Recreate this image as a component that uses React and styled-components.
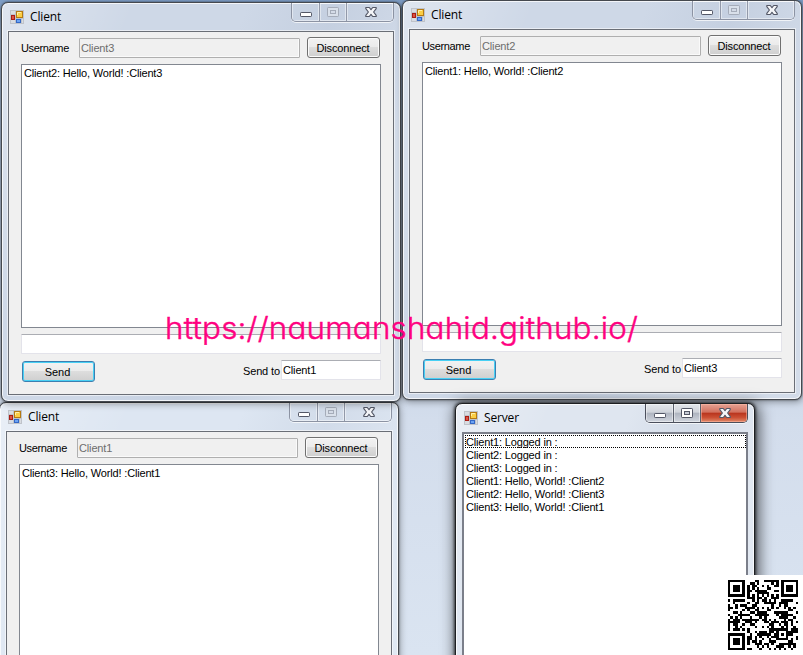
import React from "react";
import styled, { createGlobalStyle, css } from "styled-components";

const GlobalStyle = createGlobalStyle`
  *, *::before, *::after { box-sizing: border-box; }
  html, body { margin: 0; padding: 0; overflow: hidden; }
  body { font-family: "Liberation Sans", Arial, sans-serif; font-size: 11px; color: #000; }
`;

const Desktop = styled.main`
  position: relative;
  width: 803px;
  height: 655px;
  overflow: hidden;
  background: linear-gradient(180deg, #7f9fc8 0, #9db4d2 30px, #c3d0e2 300px, #d3ddec 420px, #dae4f1 655px);
`;

const Frame = styled.section`
  position: absolute;
  left: ${(p) => p.$x}px;
  top: ${(p) => p.$y}px;
  width: ${(p) => p.$w}px;
  height: ${(p) => p.$h}px;
  display: flex;
  flex-direction: column;
  padding: 0 6px 6px 6px;
  border: 1px solid ${(p) => (p.$active ? "#1d1f22" : "#45494f")};
  border-radius: 7px;
  background:
    linear-gradient(112deg, rgba(255,255,255,0.35) 0, rgba(255,255,255,0) 24%, rgba(255,255,255,0) 44%, rgba(150,165,190,0.16) 60%, rgba(255,255,255,0.1) 80%),
    ${(p) => p.$tint};
  box-shadow:
    inset 0 0 0 1px rgba(255,255,255,0.75),
    ${(p) => (p.$active ? "0 0 3px 1px rgba(0,0,0,.65), 2px 3px 14px 3px rgba(0,0,0,.55)" : "0 0 2px rgba(0,0,0,.6), 1px 2px 7px rgba(0,0,0,.35)")};
`;

const TitleBar = styled.header`
  display: flex;
  flex: none;
  height: 28px;
  padding-left: 2px;
  font: 12px/28px "Open Sans", "Noto Sans", sans-serif;
  letter-spacing: -0.15px;
`;

const AppIcon = styled.svg`
  flex: none;
  margin: 7px 6px 0 0;
`;

const Captions = styled.div`
  display: flex;
  flex: none;
  width: 103px;
  height: 19px;
  margin-left: auto;
  border: 1px solid ${(p) => (p.$active ? "#4b4f5c" : "#8c93a3")};
  border-top: 0;
  border-radius: 0 0 5px 5px;
  overflow: hidden;
  box-shadow: 0 1px 0 rgba(255,255,255,.7);
`;

const CaptionButton = styled.span`
  display: flex;
  align-items: center;
  justify-content: center;
  width: ${(p) => p.$w}px;
  border-right: 1px solid ${(p) => (p.$active ? "#5b606c" : "#9299a9")};
  box-shadow: inset 0 0 0 1px rgba(255,255,255,.45);
  ${(p) => p.$active && css`background: linear-gradient(#e3e6eb 0, #cfd3da 46%, #aeb4bf 50%, #d0d5de 100%);`}
  ${(p) => p.$danger && css`background: linear-gradient(#e5a294 0, #d1705d 46%, #b8341d 50%, #cb5034 75%, #e08a6a 100%); box-shadow: inset 0 0 0 1px rgba(255,190,170,.5);`}
  &:last-child { border-right: 0; flex: 1; padding-left: 1px; }
`;

const Client = styled.div`
  flex: 1;
  min-height: 0;
  display: flex;
  flex-direction: column;
  padding: 5px 12px 0;
  border: 1px solid #6a6e76;
  background: #f0f0f0;
  box-shadow: 0 0 0 1px rgba(255,255,255,.55);
`;

const ServerArea = styled.div`
  flex: 1;
  min-height: 0;
  padding: 1px 0 0 1px;
  border: 2px solid #7b7f8a;
  border-bottom: 0;
  background: #fff;
`;

const UserRow = styled.div`
  display: flex;
  flex: none;
  height: 21px;
`;

const Label = styled.label`
  width: ${(p) => p.$w}px;
  flex: none;
  line-height: 22px;
  white-space: nowrap;
  letter-spacing: ${(p) => p.$track || 0}px;
`;

const Field = styled.div`
  flex: none;
  width: ${(p) => p.$w}px;
  height: 20px;
  padding-left: 1px;
  line-height: 18px;
  letter-spacing: -0.15px;
  border: 1px solid #e3e3ea;
  border-top-color: #abadb3;
  border-radius: 1px;
  background: #fff;
  ${(p) => p.$disabled && css`border-color: #afafaf; background: #f0f0f0; color: #6d6d6d; margin-top: 1px; box-shadow: inset -1px -1px 0 #fafafa;`}
`;

const Push = styled.button`
  flex: none;
  width: 73px;
  height: 21px;
  margin: 0;
  padding: 0 ${(p) => (p.$primary ? 2 : 1)}px 0 0;
  font: inherit;
  line-height: 21px;
  letter-spacing: ${(p) => (p.$primary ? 0 : -0.15)}px;
  color: #000;
  border: 1px solid #707070;
  border-radius: 3px;
  background: linear-gradient(#f2f2f2 0, #ebebeb 49%, #dddddd 50%, #cfcfcf 100%);
  box-shadow: inset 0 0 0 1px #fbfbfb;
  ${(p) => p.$primary && css`border-color: #3c7fb1; box-shadow: inset 0 0 0 1px #48d0f4;`}
`;

const Log = styled.div`
  flex: none;
  height: 264px;
  margin: 6px 0;
  padding: 2px 2px;
  border: 1px solid #828790;
  background: #fff;
`;

const Line = styled.div`
  height: 13px;
  line-height: ${(p) => (p.$server ? 15 : 13)}px;
  padding: 0 0 0 ${(p) => (p.$server ? 1 : 0)}px;
  white-space: pre;
  letter-spacing: -0.17px;
  ${(p) => p.$focused && css`outline: 1px dotted #000; outline-offset: -1px;`}
`;

const SendRow = styled.div`
  display: flex;
  flex: none;
  margin-top: 6px;
`;

const SendButton = styled(Push)`
  margin: 1px auto 0 1px;
`;

const Watermark = styled.div`
  position: absolute;
  left: 165px;
  top: 310px;
  font: 350 30px/36px Inter, sans-serif;
  font-feature-settings: "cv11", "calt" 0;
  letter-spacing: 0.2px;
  white-space: nowrap;
  color: #ff0080;
  -webkit-text-stroke: 0.45px #ff0080;
  transform: scaleX(1.045);
  transform-origin: 0 0;
`;

const QrCard = styled.div`
  position: absolute;
  left: 724px;
  top: 575px;
  width: 79px;
  height: 80px;
  padding: 5px 0 0 4px;
  background: #fff;
`;

/* ---- QR code, version 3 ---- */
const SITE = "https://naumanshahid.github.io/";
const LEVELS = { L: [1, 55, 15, 1], M: [0, 44, 26, 1], Q: [3, 17, 18, 2] };

function gfMul(a, b) {
  let r = 0;
  for (let i = 7; i >= 0; i--) {
    r = (r << 1) ^ ((r >>> 7) * 0x11d);
    r ^= ((b >>> i) & 1) * a;
  }
  return r;
}

function remainder(data, n) {
  const gen = Array(n).fill(0);
  gen[n - 1] = 1;
  let root = 1;
  for (let i = 0; i < n; i++) {
    for (let j = 0; j < n; j++) {
      gen[j] = gfMul(gen[j], root);
      if (j + 1 < n) gen[j] ^= gen[j + 1];
    }
    root = gfMul(root, 2);
  }
  const out = Array(n).fill(0);
  data.forEach((b) => {
    const f = b ^ out.shift();
    out.push(0);
    gen.forEach((c, i) => { out[i] ^= gfMul(c, f); });
  });
  return out;
}

const MASKS = [
  (x, y) => (x + y) % 2 === 0,
  (x, y) => y % 2 === 0,
  (x) => x % 3 === 0,
  (x, y) => (x + y) % 3 === 0,
  (x, y) => (Math.floor(x / 3) + Math.floor(y / 2)) % 2 === 0,
  (x, y) => ((x * y) % 2) + ((x * y) % 3) === 0,
  (x, y) => (((x * y) % 2) + ((x * y) % 3)) % 2 === 0,
  (x, y) => (((x + y) % 2) + ((x * y) % 3)) % 2 === 0,
];

function makeQr(text, level, mask) {
  const [fmt, per, ecc, blocks] = LEVELS[level];
  const size = 29;
  const total = per * blocks;
  let bits = "0100" + text.length.toString(2).padStart(8, "0");
  for (const ch of text) bits += ch.charCodeAt(0).toString(2).padStart(8, "0");
  bits += "0000";
  const data = bits.match(/.{8}/g).map((b) => parseInt(b, 2));
  for (let pad = 0xec; data.length < total; pad ^= 0xfd) data.push(pad);
  const parts = Array.from({ length: blocks }, (_, i) => data.slice(i * per, (i + 1) * per));
  const checks = parts.map((p) => remainder(p, ecc));
  const words = [];
  for (let i = 0; i < per; i++) parts.forEach((p) => words.push(p[i]));
  for (let i = 0; i < ecc; i++) checks.forEach((p) => words.push(p[i]));

  const m = Array.from({ length: size }, () => Array(size).fill(false));
  const fixed = Array.from({ length: size }, () => Array(size).fill(false));
  const put = (x, y, v) => {
    if (x < 0 || y < 0 || x >= size || y >= size) return;
    m[y][x] = !!v;
    fixed[y][x] = true;
  };
  for (let i = 0; i < size; i++) {
    put(6, i, i % 2 === 0);
    put(i, 6, i % 2 === 0);
  }
  [[3, 3], [size - 4, 3], [3, size - 4]].forEach(([cx, cy]) => {
    for (let dy = -4; dy <= 4; dy++)
      for (let dx = -4; dx <= 4; dx++) {
        const d = Math.max(Math.abs(dx), Math.abs(dy));
        put(cx + dx, cy + dy, d !== 2 && d !== 4);
      }
  });
  for (let dy = -2; dy <= 2; dy++)
    for (let dx = -2; dx <= 2; dx++)
      put(22 + dx, 22 + dy, Math.max(Math.abs(dx), Math.abs(dy)) !== 1);

  const info = (fmt << 3) | mask;
  let rem = info;
  for (let i = 0; i < 10; i++) rem = (rem << 1) ^ ((rem >>> 9) * 0x537);
  const code = ((info << 10) | rem) ^ 0x5412;
  const bit = (i) => (code >>> i) & 1;
  for (let i = 0; i <= 5; i++) put(8, i, bit(i));
  put(8, 7, bit(6));
  put(8, 8, bit(7));
  put(7, 8, bit(8));
  for (let i = 9; i < 15; i++) put(14 - i, 8, bit(i));
  for (let i = 0; i < 8; i++) put(size - 1 - i, 8, bit(i));
  for (let i = 8; i < 15; i++) put(8, size - 15 + i, bit(i));
  put(8, size - 8, 1);

  let k = 0;
  for (let right = size - 1; right >= 1; right -= 2) {
    if (right === 6) right = 5;
    for (let v = 0; v < size; v++)
      for (let j = 0; j < 2; j++) {
        const x = right - j;
        const y = ((right + 1) & 2) === 0 ? size - 1 - v : v;
        if (fixed[y][x]) continue;
        const on = k < words.length * 8 && ((words[k >>> 3] >>> (7 - (k & 7))) & 1);
        m[y][x] = !!on !== MASKS[mask](x, y);
        k++;
      }
  }
  return m;
}

function QrCode() {
  const m = makeQr(SITE, "M", 2);
  const d = m.flatMap((row, y) => row.map((on, x) => (on ? `M${x} ${y}h1v1h-1z` : ""))).join("");
  return (
    <svg width="70" height="70" viewBox="0 0 29 29" shapeRendering="crispEdges">
      <path d={d} fill="#000" />
    </svg>
  );
}

function FormIcon() {
  return (
    <AppIcon width="14" height="14" viewBox="0 0 14 14">
      <rect width="14" height="14" fill="#bfc3ca" />
      <path d="M1 1h4v3H1zM1 10h4v3H1zM12 9h1v4h-1z" fill="#d9dce1" />
      <rect x="6.5" y="1.5" width="6" height="6" fill="#fbce45" stroke="#b57a13" />
      <path d="M7.5 5V2.5H11" stroke="#fff0a8" fill="none" />
      <rect x="1.5" y="5.5" width="3" height="4" fill="#dc5341" stroke="#a91d16" />
      <rect x="6.5" y="9.5" width="4" height="3" fill="#6ba3f4" stroke="#3468c6" />
    </AppIcon>
  );
}

function MinGlyph() {
  return (
    <svg width="12" height="17" viewBox="0 0 12 17">
      <rect x=".5" y="8.5" width="11" height="4" rx=".7" fill="#fff" stroke="#535766" />
    </svg>
  );
}

function MaxGlyph({ active }) {
  const c = active ? "#535766" : "#a5acb9";
  return (
    <svg width="12" height="17" viewBox="0 0 12 17">
      <rect x=".5" y="3.5" width="11" height="9" rx=".7" fill={active ? "#fff" : "#d9e0ea"} stroke={c} />
      <rect x="3.5" y="6.5" width="5" height="3" fill={active ? "#c7ccd6" : "#d4dbe7"} stroke={c} />
    </svg>
  );
}

function CloseGlyph() {
  return (
    <svg width="12" height="17" viewBox="0 0 12 17">
      <path d="M.8 3.5h3.5L6 5.7l1.7-2.2h3.5v1.2L8.6 8l2.6 3.3v1.2H7.7L6 10.3l-1.7 2.2H.8v-1.2L3.4 8 .8 4.7z" fill="#f4f5f8" stroke="#535766" strokeWidth="1.15" strokeLinejoin="round" />
    </svg>
  );
}

function Window({ title, x, y, w, h, active, tint, children }) {
  return (
    <Frame $x={x} $y={y} $w={w} $h={h} $active={active} $tint={tint}>
      <TitleBar>
        <FormIcon />
        {title}
        <Captions $active={active}>
          <CaptionButton $w={28} $active={active}><MinGlyph /></CaptionButton>
          <CaptionButton $w={27} $active={active}><MaxGlyph active={active} /></CaptionButton>
          <CaptionButton $active={active} $danger={active}><CloseGlyph /></CaptionButton>
        </Captions>
      </TitleBar>
      {children}
    </Frame>
  );
}

function ClientWindow({ x, y, name, message, target, tint }) {
  return (
    <Window title="Client" x={x} y={y} w={400} h={400} tint={tint}>
      <Client>
        <UserRow>
          <Label $w={58} $track={-0.35}>Username</Label>
          <Field $w={221} $disabled>{name}</Field>
          <Label $w={7} />
          <Push>Disconnect</Push>
        </UserRow>
        <Log><Line>{message}</Line></Log>
        {target && (
          <>
            <Field $w={360} />
            <SendRow>
              <SendButton $primary>Send</SendButton>
              <Label $w={38} $track={-0.15}>Send to</Label>
              <Field $w={100}>{target}</Field>
            </SendRow>
          </>
        )}
      </Client>
    </Window>
  );
}

const LOG = [
  "Client1: Logged in :",
  "Client2: Logged in :",
  "Client3: Logged in :",
  "Client1: Hello, World! :Client2",
  "Client2: Hello, World! :Client3",
  "Client3: Hello, World! :Client1",
];

export default function App() {
  return (
    <Desktop>
      <GlobalStyle />
      <ClientWindow x={-1} y={402} name="Client1" message="Client3: Hello, World! :Client1" tint="#dde6f2" />
      <ClientWindow x={1} y={2} name="Client3" message="Client2: Hello, World! :Client3" target="Client1" tint="#ced8e7" />
      <ClientWindow x={402} y={0} name="Client2" message="Client1: Hello, World! :Client2" target="Client3" tint="#ced8e7" />
      <Window title="Server" x={455} y={403} w={300} h={270} active tint="#dfe6f0">
        <ServerArea>
          {LOG.map((text, i) => <Line key={text} $server $focused={i === 0}>{text}</Line>)}
        </ServerArea>
      </Window>
      <Watermark>{SITE}</Watermark>
      <QrCard><QrCode /></QrCard>
    </Desktop>
  );
}
